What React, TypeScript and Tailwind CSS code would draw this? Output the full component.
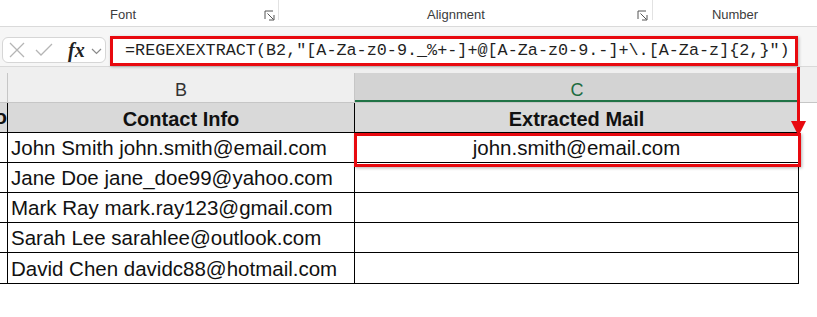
import React from "react";

const rows = [
  "John Smith john.smith@email.com",
  "Jane Doe jane_doe99@yahoo.com",
  "Mark Ray mark.ray123@gmail.com",
  "Sarah Lee sarahlee@outlook.com",
  "David Chen davidc88@hotmail.com",
];

const formula =
  '=REGEXEXTRACT(B2,"[A-Za-z0-9._%+-]+@[A-Za-z0-9.-]+\\.[A-Za-z]{2,}")';

function Launcher() {
  return (
    <svg width="11" height="11" viewBox="0 0 11 11" className="text-[#555]">
      <polyline points="1,9 1,1 9,1" fill="none" stroke="currentColor" strokeWidth="1" />
      <line x1="3.5" y1="3.5" x2="9.5" y2="9.5" stroke="currentColor" strokeWidth="1" />
      <polyline points="5,10 10,10 10,5" fill="none" stroke="currentColor" strokeWidth="1" />
    </svg>
  );
}

function FxBox() {
  return (
    <div className="flex h-[26px] w-[104px] items-center rounded-[6px] border border-[#d6d6d6] bg-white pl-[5px]">
      <svg width="18" height="16" viewBox="0 0 18 16">
        <path d="M2 1 L16 15 M16 1 L2 15" stroke="#b5b5b5" strokeWidth="1.3" fill="none" />
      </svg>
      <svg width="18" height="14" viewBox="0 0 18 14" className="ml-[9px]">
        <path d="M1 7 L6 12 L17 1" stroke="#b5b5b5" strokeWidth="1.3" fill="none" />
      </svg>
      <span
        className="ml-[15px] text-[20px] font-bold italic leading-none text-[#222]"
        style={{ fontFamily: '"Liberation Serif", serif' }}
      >
        fx
      </span>
      <svg width="11" height="7" viewBox="0 0 11 7" className="ml-[6px] mt-[3px]">
        <path d="M1 1 L5.5 5.5 L10 1" stroke="#8a8a8a" strokeWidth="1.2" fill="none" />
      </svg>
    </div>
  );
}

export default function App() {
  return (
    <div
      className="relative h-[317px] w-[817px] overflow-hidden bg-white"
      style={{ fontFamily: '"Liberation Sans", Arial, sans-serif' }}
    >
      {/* ribbon group labels */}
      <div className="flex h-[27px] border-b border-[#dadada] bg-white text-[13px] text-[#3c3c3c] shadow-[0_1px_2px_rgba(0,0,0,0.08)]">
        <div className="mb-[6px] flex w-[279px] items-start border-r border-[#e2e2e2] pt-[8px]">
          <span className="ml-[110px] leading-none">Font</span>
          <span className="ml-auto mr-[3px] mt-[2px]">
            <Launcher />
          </span>
        </div>
        <div className="mb-[6px] flex w-[374px] items-start border-r border-[#e2e2e2] pt-[8px]">
          <span className="ml-[148px] leading-none">Alignment</span>
          <span className="ml-auto mr-[4px] mt-[2px]">
            <Launcher />
          </span>
        </div>
        <div className="flex flex-1 items-start justify-center pt-[8px]">
          <span className="leading-none">Number</span>
        </div>
      </div>

      {/* formula bar */}
      <div className="flex h-[40px] items-start gap-[4px] border-b border-[#d9d9d9] bg-[#f6f6f6] pl-[2px] pt-[9px]">
        <div className="pt-[1px]">
          <FxBox />
        </div>
        <div className="flex h-[30px] w-[688px] items-center border-[3px] border-[#e8090f] bg-white pl-[12px] shadow-[1px_1px_3px_rgba(0,0,0,0.25)]">
          <span
            className="whitespace-pre text-[16.8px] leading-none text-[#1f1f1f]"
            style={{ fontFamily: '"Liberation Mono", "DejaVu Sans Mono", monospace' }}
          >
            {formula}
          </span>
        </div>
      </div>

      {/* sheet */}
      <div className="bg-[#efefef] pt-[6px]">
        <div className="flex h-[30px] border-b border-[#c6c6c6] text-[18px]">
          <div className="w-[8px] border-r border-[#c6c6c6]" />
          <div className="flex w-[347px] items-center justify-center border-r border-[#c6c6c6] pt-[6px] text-[#333]">
            B
          </div>
          <div className="flex w-[444px] items-center justify-center border-b-2 border-[#217346] bg-[#d3d3d3] pt-[7px] text-[#1d6b40]">
            C
          </div>
          <div className="flex-1" />
        </div>
      </div>

      <div className="text-[20.5px] text-[#111]">
        <div className="flex h-[30px]">
          <div className="flex w-[8px] items-center justify-end overflow-hidden border-r border-b border-black bg-[#d9d9d9] font-bold">
            <span className="leading-none">o</span>
          </div>
          <div className="flex w-[347px] items-center justify-center border-r border-b border-black bg-[#d9d9d9] pt-[2px] text-[20px] font-bold">
            Contact Info
          </div>
          <div className="flex w-[444px] items-center justify-center border-r border-b border-black bg-[#d9d9d9] pt-[2px] text-[20px] font-bold">
            Extracted Mail
          </div>
        </div>
        {rows.map((r, i) => (
          <div key={r} className="flex h-[30px] last:h-[31px]">
            <div className="w-[8px] border-r border-b border-black" />
            <div className="flex w-[347px] items-center whitespace-nowrap border-r border-b border-black pl-[3px] pt-[2px]">
              {r}
            </div>
            <div className="flex w-[444px] items-center justify-center border-r border-b border-black pt-[2px]">
              {i === 0 ? "john.smith@email.com" : ""}
            </div>
          </div>
        ))}
      </div>

      {/* annotations */}
      <div className="absolute left-[354px] top-[133px] h-[34px] w-[447px] border-[3px] border-[#e8090f] shadow-[1px_1px_3px_rgba(0,0,0,0.3)]" />
      <div className="absolute left-[797px] top-[67px] h-[57px] w-[3px] bg-[#e8090f]" />
      <svg className="absolute left-[791px] top-[121px]" width="15" height="15" viewBox="0 0 15 15">
        <polygon points="0,0 15,0 7.5,15" fill="#e8090f" />
      </svg>
    </div>
  );
}
